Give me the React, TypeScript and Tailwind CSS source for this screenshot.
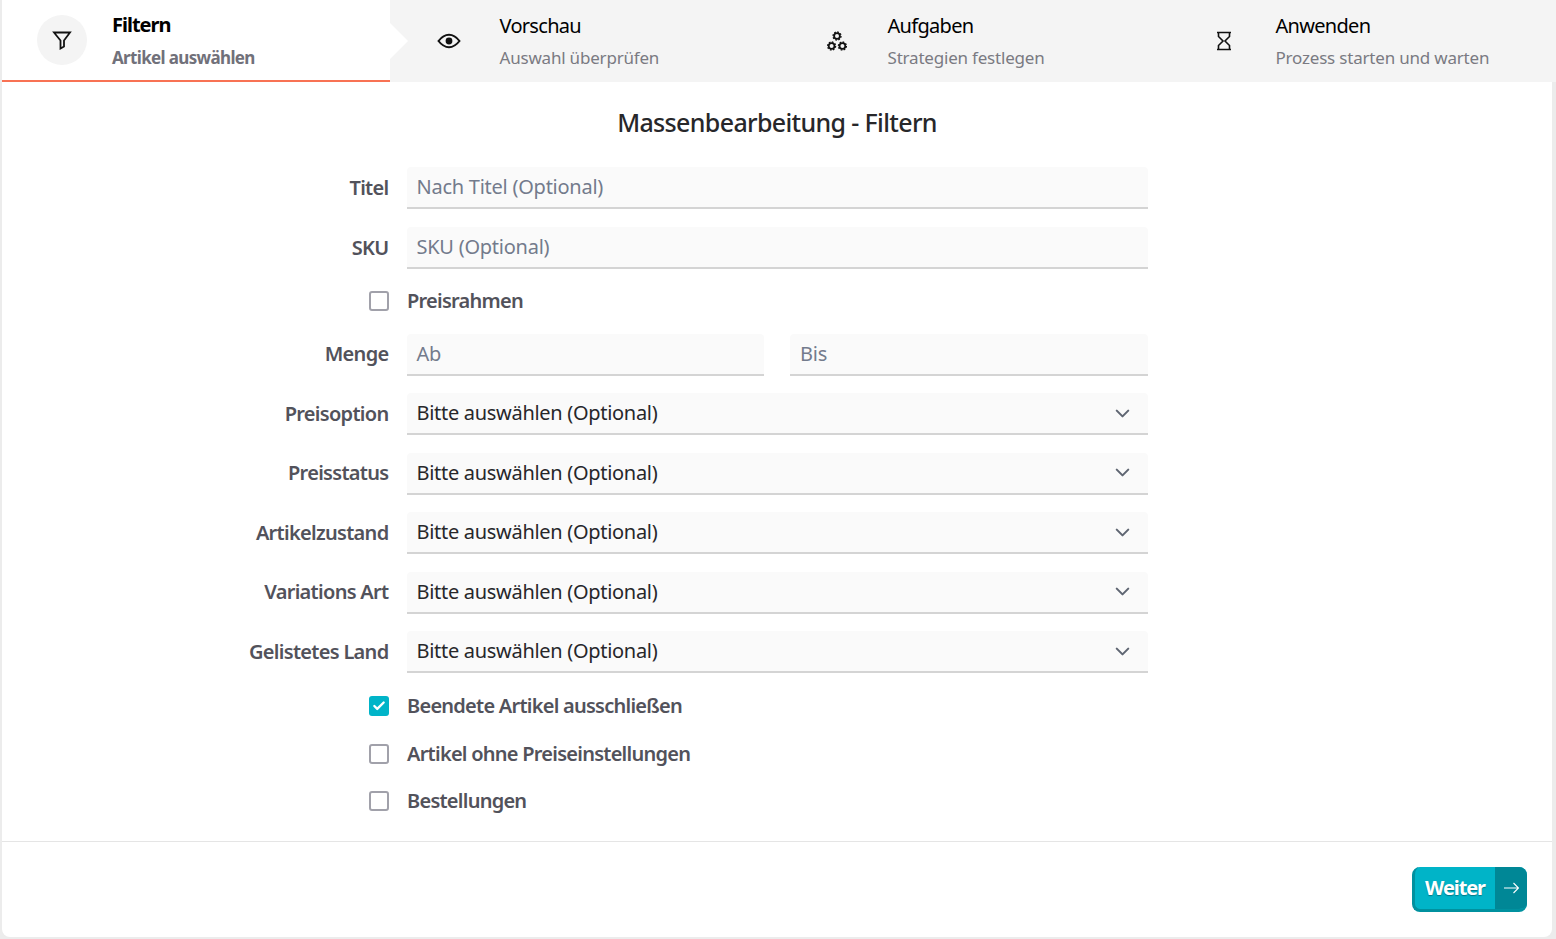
import type { ReactNode } from 'react';
import { ChevronDown, Check } from 'lucide-react';

const font = "[font-family:'Noto_Sans',sans-serif]";

function FilterIcon() {
  return (
    <svg width="20" height="20" viewBox="0 0 20 20" fill="none" stroke="currentColor" strokeWidth="1.8" strokeLinejoin="miter">
      <path d="M2 2.5h16l-6 8v6l-3.5 2v-8z" />
    </svg>
  );
}

function EyeIcon() {
  return (
    <svg width="24" height="16" viewBox="0 0 24 16" fill="none" stroke="currentColor" strokeWidth="2">
      <path d="M1.5 8C5 3.5 8.5 1.8 12 1.8S19 3.5 22.5 8C19 12.5 15.5 14.2 12 14.2S5 12.5 1.5 8Z" />
      <circle cx="12" cy="8" r="3.4" fill="currentColor" stroke="none" />
    </svg>
  );
}

function GearsIcon() {
  const centers = [[10, 5], [4.6, 15], [15.4, 15]];
  return (
    <svg width="20" height="20" viewBox="0 0 20 20" fill="none" stroke="currentColor">
      {centers.map(([x, y]) => (
        <g key={`${x}-${y}`}>
          <circle cx={x} cy={y} r="2.9" strokeWidth="1.8" />
          <circle cx={x} cy={y} r="4" strokeWidth="1.3" strokeDasharray="1.7 1.4" />
        </g>
      ))}
    </svg>
  );
}

function HourglassIcon() {
  return (
    <svg width="16" height="20" viewBox="1 0 16 20" fill="none" stroke="currentColor" strokeWidth="1.6">
      <path d="M1 1.5h14M1 18.5h14M2.5 1.5V5.5L7 10 2.5 14.5V18.5M13.5 1.5V5.5L9 10 13.5 14.5V18.5" />
    </svg>
  );
}

function Step({ icon, title, sub, active }: { icon: ReactNode; title: string; sub: string; active?: boolean }) {
  if (active) {
    return (
      <div className="relative z-10 flex h-[82px] w-[388px] shrink-0 items-center border-b-2 border-[#f87254] bg-white pl-[35px]">
        <div className="flex h-[50px] w-[50px] items-center justify-center rounded-full bg-[#f4f4f4] text-[#111]">{icon}</div>
        <div className="ml-[25px] flex flex-col gap-[8px] pt-[2px]">
          <div className="text-[20px] leading-[26px] font-bold tracking-[-1px] text-black">{title}</div>
          <div className="text-[17px] leading-[24px] font-bold tracking-[-0.65px] text-[#71717a]">{sub}</div>
        </div>
        <div className="absolute top-[23px] right-[-18px] h-0 w-0 border-y-[18px] border-l-[18px] border-y-transparent border-l-white" />
      </div>
    );
  }
  return (
    <div className="flex h-[82px] w-[388px] shrink-0 items-center pl-[47px]">
      <div className="flex w-[24px] items-center justify-center text-[#111]">{icon}</div>
      <div className="ml-[38.5px] flex flex-col gap-[7px] pt-[1px]">
        <div className="text-[20px] leading-[26px] tracking-[-0.7px] text-black">{title}</div>
        <div className="text-[17px] leading-[24px] tracking-[-0.2px] text-[#7a7a82]">{sub}</div>
      </div>
    </div>
  );
}

function Row({ label, children }: { label: string; children: ReactNode }) {
  return (
    <div className="flex items-center">
      <label className="w-[386.5px] shrink-0 pb-[1px] text-right text-[20px] font-semibold tracking-[-0.7px] text-[#52525b]">{label}</label>
      <div className="ml-[18px] flex w-[741px] gap-[26px]">{children}</div>
    </div>
  );
}

function TextInput({ placeholder }: { placeholder: string }) {
  return (
    <div className="flex h-[42px] min-w-0 flex-1 items-center rounded-t-sm border-b-2 border-[#d4d4d4] bg-[#fafafa] px-[10px] text-[20px] tracking-[-0.25px] text-[#737b8c]">
      {placeholder}
    </div>
  );
}

function SelectRow({ label }: { label: string }) {
  return (
    <Row label={label}>
      <div className="flex h-[42px] flex-1 items-center justify-between rounded-t-sm border-b-2 border-[#d4d4d4] bg-[#fafafa] pr-[14px] pl-[10px] text-[20px] tracking-[-0.3px] text-[#27272a]">
        Bitte auswählen (Optional)
        <ChevronDown size={23} strokeWidth={2.2} className="text-[#5f6672]" />
      </div>
    </Row>
  );
}

function CheckRow({ label, checked }: { label: string; checked?: boolean }) {
  return (
    <div className="flex h-[24px] items-center pl-[367px]">
      {checked ? (
        <span className="flex h-[20px] w-[20px] items-center justify-center rounded-[3px] bg-[#00b4c8] text-white">
          <Check size={14} strokeWidth={4} />
        </span>
      ) : (
        <span className="h-[20px] w-[20px] rounded-[3px] border-2 border-[#a1a1aa] bg-white" />
      )}
      <span className="ml-[18px] text-[20px] font-semibold tracking-[-0.75px] text-[#52525b]">{label}</span>
    </div>
  );
}

export default function App() {
  return (
    <div className={`h-[939px] overflow-hidden bg-[#ececec] pr-[4px] pb-[2px] pl-[2px] ${font}`}>
      <div className="flex h-[937px] flex-col rounded-b-lg rounded-tl-md bg-white">
        <div className="mr-[-4px] flex h-[82px] shrink-0 bg-[#f4f4f4]">
          <Step active icon={<FilterIcon />} title="Filtern" sub="Artikel auswählen" />
          <Step icon={<EyeIcon />} title="Vorschau" sub="Auswahl überprüfen" />
          <Step icon={<GearsIcon />} title="Aufgaben" sub="Strategien festlegen" />
          <Step icon={<HourglassIcon />} title="Anwenden" sub="Prozess starten und warten" />
        </div>
        <h1 className="mt-[22px] text-center text-[25px] leading-[36px] font-medium tracking-[-0.65px] text-[#27272a]">Massenbearbeitung - Filtern</h1>
        <div className="mt-[27px] flex flex-col">
          <div className="flex flex-col gap-[18px]">
            <Row label="Titel"><TextInput placeholder="Nach Titel (Optional)" /></Row>
            <Row label="SKU"><TextInput placeholder="SKU (Optional)" /></Row>
          </div>
          <div className="mt-[20px]"><CheckRow label="Preisrahmen" /></div>
          <div className="mt-[20.5px] flex flex-col gap-[17.5px]">
            <Row label="Menge">
              <TextInput placeholder="Ab" />
              <TextInput placeholder="Bis" />
            </Row>
            <SelectRow label="Preisoption" />
            <SelectRow label="Preisstatus" />
            <SelectRow label="Artikelzustand" />
            <SelectRow label="Variations Art" />
            <SelectRow label="Gelistetes Land" />
          </div>
          <div className="mt-[21px] flex flex-col gap-[23.5px]">
            <CheckRow label="Beendete Artikel ausschließen" checked />
            <CheckRow label="Artikel ohne Preiseinstellungen" />
            <CheckRow label="Bestellungen" />
          </div>
        </div>
        <div className="mt-auto flex h-[96px] items-center justify-end border-t border-[#e5e5e5] pr-[25px]">
          <button className="flex h-[45px] overflow-hidden rounded-lg border-b-[3px] border-l-[3px] border-[#00919f] bg-[#00b4c8] text-white">
            <span className="flex h-full w-[80px] items-center justify-center text-[20px] font-bold tracking-[-1.1px] [text-shadow:0_1px_1px_rgba(0,80,90,0.6)]">Weiter</span>
            <span className="flex h-full w-[32px] items-center justify-center bg-[#008796]">
              <svg width="15" height="12" viewBox="0 0 15 12" fill="none" stroke="currentColor" strokeWidth="1.1">
                <path d="M0 6h14.5M9.5 1l5 5-5 5" />
              </svg>
            </span>
          </button>
        </div>
      </div>
    </div>
  );
}
